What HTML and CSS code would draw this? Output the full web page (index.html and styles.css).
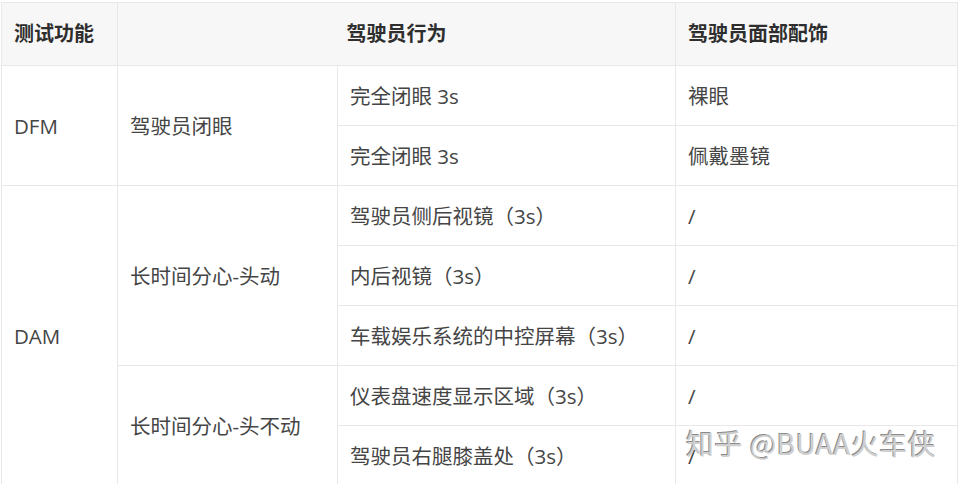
FILE: index.html
```html
<!DOCTYPE html>
<html lang="zh">
<head>
<meta charset="utf-8">
<link rel="stylesheet" href="styles.css">
</head>
<body>
<div class="wrap">
<table class="grid">
  <colgroup>
    <col class="c1"><col class="c2"><col class="c3"><col class="c4">
  </colgroup>
  <thead>
    <tr class="head">
      <th>测试功能</th>
      <th colspan="2" class="center">驾驶员行为</th>
      <th>驾驶员面部配饰</th>
    </tr>
  </thead>
  <tbody>
    <tr>
      <td rowspan="2">DFM</td>
      <td rowspan="2">驾驶员闭眼</td>
      <td>完全闭眼 3s</td>
      <td>裸眼</td>
    </tr>
    <tr>
      <td>完全闭眼 3s</td>
      <td>佩戴墨镜</td>
    </tr>
    <tr>
      <td rowspan="5">DAM</td>
      <td rowspan="3">长时间分心-头动</td>
      <td>驾驶员侧后视镜（3s）</td>
      <td>/</td>
    </tr>
    <tr>
      <td>内后视镜（3s）</td>
      <td>/</td>
    </tr>
    <tr>
      <td>车载娱乐系统的中控屏幕（3s）</td>
      <td>/</td>
    </tr>
    <tr>
      <td rowspan="2">长时间分心-头不动</td>
      <td>仪表盘速度显示区域（3s）</td>
      <td>/</td>
    </tr>
    <tr>
      <td>驾驶员右腿膝盖处（3s）</td>
      <td>/</td>
    </tr>
  </tbody>
</table>
<div class="mark">知乎 @BUAA火车侠</div>
</div>
</body>
</html>
```
FILE: styles.css
```css
html, body {
  margin: 0;
  padding: 0;
  background: #ffffff;
}
body {
  font-family: "Open Sans", "Noto Sans CJK SC", sans-serif;
  color: #454545;
}
.wrap {
  position: relative;
  width: 960px;
  height: 484px;
  overflow: hidden;
  padding: 2px 0 0 1px;
  box-sizing: border-box;
}
.grid {
  border-collapse: collapse;
  table-layout: fixed;
  width: 956px;
  font-size: 20.5px;
}
.c1 { width: 116px; }
.c2 { width: 220px; }
.c3 { width: 338px; }
.c4 { width: 282px; }
.grid th, .grid td {
  border: 1px solid #e8e8e8;
  padding: 0 12px;
  text-align: left;
  vertical-align: middle;
  white-space: nowrap;
  line-height: 24px;
}
.head th {
  height: 62px;
  background: #f7f7f7;
  font-weight: 700;
  font-size: 20px;
  color: #2e2e2e;
}
.head th.center { text-align: center; }
.grid td { height: 59px; }
.mark {
  position: absolute;
  left: 686px;
  top: 423px;
  font-family: "Noto Sans CJK SC", sans-serif;
  font-size: 28px;
  line-height: 40px;
  letter-spacing: 0.5px;
  color: #cfcfcf;
  text-shadow: -1px -1px 0 #8c8c8c;
  white-space: nowrap;
}
```
